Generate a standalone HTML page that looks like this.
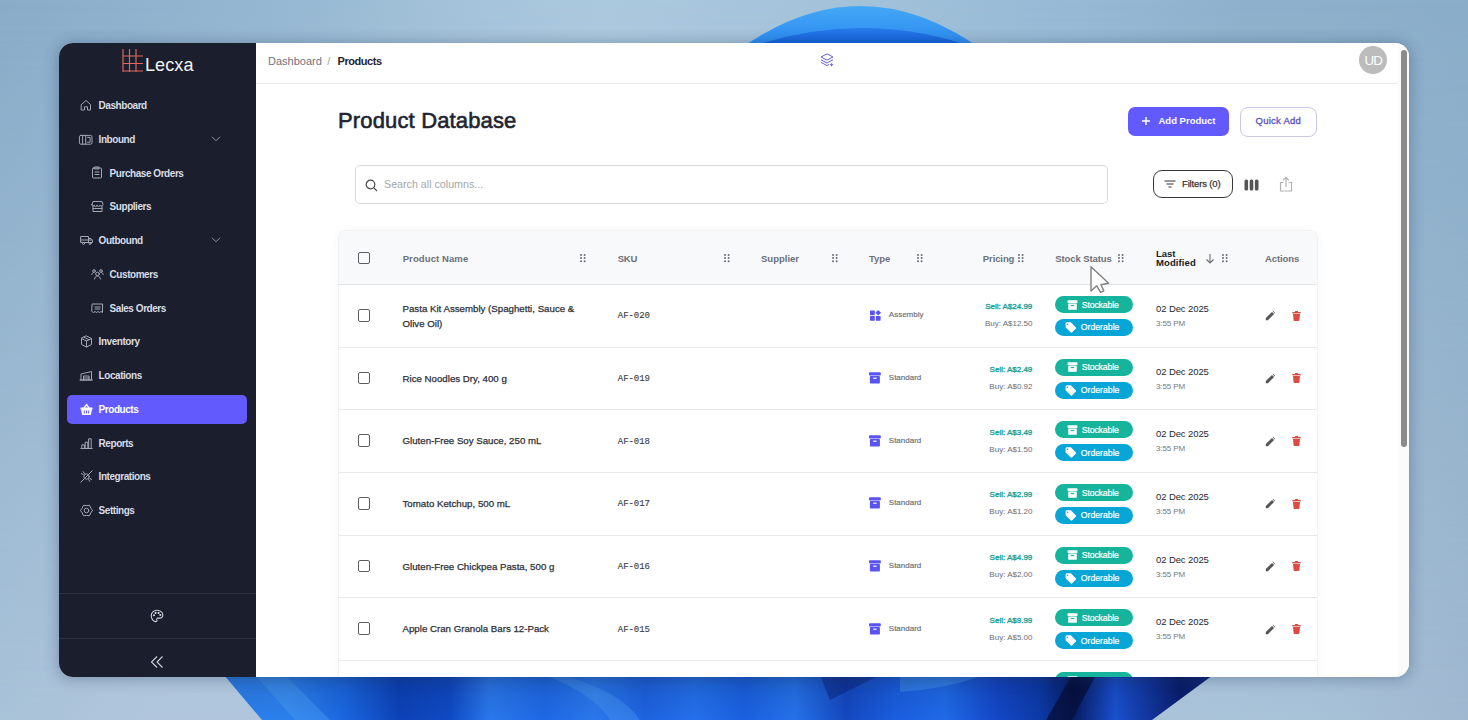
<!DOCTYPE html>
<html><head><meta charset="utf-8">
<style>
*{margin:0;padding:0;box-sizing:border-box}
html,body{width:1468px;height:720px;overflow:hidden}
body{position:relative;font-family:"Liberation Sans",sans-serif;background:#98b8d2}
.abs{position:absolute}
#bg{position:absolute;left:0;top:0;width:1468px;height:720px}
#shadow{position:absolute;left:59px;top:43px;width:1350px;height:634px;border-radius:14px;box-shadow:0 1px 14px 2px rgba(30,50,85,.30)}
#win{position:absolute;left:0;top:0;width:1468px;height:720px;clip-path:inset(43px 59px 43px 59px round 14px);background:#fff}
#side{position:absolute;left:59px;top:43px;width:197px;height:634px;background:#1b1f2d}
.nav{position:absolute;color:#d9dce4;font-weight:700;font-size:10px;letter-spacing:-0.45px;white-space:nowrap;line-height:12px}
.ico{position:absolute;overflow:visible}
.t{white-space:nowrap}
</style></head>
<body>
<svg id="bg" width="1468" height="720" viewBox="0 0 1468 720">
  <defs>
    <linearGradient id="bgt" x1="0" y1="0" x2="1" y2="0">
      <stop offset="0" stop-color="#89acc8"/>
      <stop offset=".21" stop-color="#98b9d3"/>
      <stop offset=".31" stop-color="#a4c3da"/>
      <stop offset=".41" stop-color="#abc9de"/>
      <stop offset=".58" stop-color="#a3c2da"/>
      <stop offset=".75" stop-color="#95b8d4"/>
      <stop offset=".855" stop-color="#8eb0cb"/>
      <stop offset="1" stop-color="#8aaec9"/>
    </linearGradient>
    <linearGradient id="bgb" x1="0" y1="0" x2="1" y2="0">
      <stop offset="0" stop-color="#a8c2d8"/>
      <stop offset=".105" stop-color="#b1c6dc"/>
      <stop offset=".5" stop-color="#aec5db"/>
      <stop offset=".89" stop-color="#a8c2d8"/>
      <stop offset="1" stop-color="#a0b8d0"/>
    </linearGradient>
    <linearGradient id="fade" x1="0" y1="0" x2="0" y2="1">
      <stop offset="0" stop-color="#fff" stop-opacity="0"/>
      <stop offset="1" stop-color="#fff" stop-opacity="1"/>
    </linearGradient>
    <mask id="m1"><rect width="1468" height="720" fill="url(#fade)"/></mask>
    <linearGradient id="arc" x1="0" y1="6" x2="0" y2="43" gradientUnits="userSpaceOnUse">
      <stop offset="0" stop-color="#44a8f6"/>
      <stop offset="1" stop-color="#2c8cf0"/>
    </linearGradient>
    <linearGradient id="arc2" x1="0" y1="27" x2="0" y2="43" gradientUnits="userSpaceOnUse">
      <stop offset="0" stop-color="#2a7eec"/>
      <stop offset="1" stop-color="#1462de"/>
    </linearGradient>
    <linearGradient id="bloom" x1="225" y1="0" x2="1213" y2="0" gradientUnits="userSpaceOnUse">
      <stop offset="0.000" stop-color="#2c7fec"/>
      <stop offset="0.066" stop-color="#2b80ee"/>
      <stop offset="0.121" stop-color="#1a66e0"/>
      <stop offset="0.177" stop-color="#0d42b8"/>
      <stop offset="0.228" stop-color="#0f4ac4"/>
      <stop offset="0.268" stop-color="#2a78ec"/>
      <stop offset="0.324" stop-color="#1e68e6"/>
      <stop offset="0.374" stop-color="#2a78ec"/>
      <stop offset="0.425" stop-color="#1d62e0"/>
      <stop offset="0.476" stop-color="#2470ec"/>
      <stop offset="0.526" stop-color="#1a60e0"/>
      <stop offset="0.577" stop-color="#2572ea"/>
      <stop offset="0.628" stop-color="#1448c0"/>
      <stop offset="0.678" stop-color="#1a5ee0"/>
      <stop offset="0.729" stop-color="#1f6ae8"/>
      <stop offset="0.779" stop-color="#1448c8"/>
      <stop offset="0.825" stop-color="#0c3aa8"/>
      <stop offset="0.860" stop-color="#071d66"/>
      <stop offset="0.901" stop-color="#1a50d0"/>
      <stop offset="0.967" stop-color="#0a1e70"/>
      <stop offset="1.000" stop-color="#0e2a80"/>
    </linearGradient>
    <linearGradient id="bloomv" x1="0" y1="0" x2="0" y2="1">
      <stop offset="0" stop-color="#000" stop-opacity=".12"/>
      <stop offset="1" stop-color="#000" stop-opacity="0"/>
    </linearGradient>
  </defs>
  <rect width="1468" height="720" fill="url(#bgt)"/>
  <rect width="1468" height="720" fill="url(#bgb)" mask="url(#m1)"/>
  <path d="M738.5 50 Q860.5 -38 982.5 50Z" fill="url(#arc)"/>
  <path d="M742 50 Q862 6 982 50Z" fill="url(#arc2)"/>
  <path d="M224 675 L1213 675 L1152 720 L262 720 Z" fill="url(#bloom)"/>
  <path d="M255 675 L285 675 L330 720 L295 720Z" fill="#4a9cf4" opacity=".45"/>
  <path d="M560 675 Q620 690 640 720 L610 720 Q595 695 545 675Z" fill="#4a9cf4" opacity=".4"/>
  <path d="M1072 675 L1096 675 L1072 720 L1046 720Z" fill="#050f3a" opacity=".75"/>
  <path d="M900 675 L985 675 Q940 690 900 692Z" fill="#4a9cf4" opacity=".45"/>
  <path d="M820 675 L880 675 Q850 690 830 700Z" fill="#0a2380" opacity=".5"/>
  <path d="M224 675 L1213 675 L1152 720 L262 720 Z" fill="url(#bloomv)"/>
</svg>
<div id="shadow"></div>
<div id="win">
  <div id="side"></div>

<svg class="ico" style="left:121px;top:48px" width="23" height="25" viewBox="0 0 23 25" fill="none" stroke="#e0685b" stroke-width="1.15">
<path d="M2 1v23M8.5 1v23M15 1v23M2 8h20M2 15.5h20M2 23h20"/></svg>
<div class="abs" style="left:145px;top:54px;font-size:18px;line-height:22px;color:#f2f3f6;letter-spacing:0.1px">Lecxa</div>
<div class="abs" style="left:59px;top:593px;width:197px;height:1px;background:#2c3140"></div>
<div class="abs" style="left:59px;top:638px;width:197px;height:1px;background:#2c3140"></div>
<svg class="ico" style="left:150px;top:609px" width="14" height="14" viewBox="0 0 14 14" fill="none" stroke="#d0d3da" stroke-width="1.1">
<path d="M7 1.2C3.7 1.2 1.2 3.7 1.2 6.8c0 3 2.4 5.8 4.6 5.8 1.2 0 1.4-.8 1-1.6-.4-.9.1-1.9 1.2-1.9h1.5c2 0 3.3-1.3 3.3-3.1C12.8 3.300 10.200 1.2 7 1.2z"/>
<circle cx="4" cy="6.3" r=".5" fill="#d0d3da"/><circle cx="5.6" cy="3.9" r=".5" fill="#d0d3da"/><circle cx="8.6" cy="3.9" r=".5" fill="#d0d3da"/><circle cx="10.3" cy="6" r=".5" fill="#d0d3da"/></svg>
<svg class="ico" style="left:150px;top:655px" width="14" height="14" viewBox="0 0 14 14" fill="none" stroke="#d0d3da" stroke-width="1.1">
<path d="M7 1.5L1.5 7 7 12.5M12.5 1.5L7 7l5.5 5.5"/></svg>
<svg class="ico" style="left:80px;top:98.9px" width="13" height="13" viewBox="0 0 13 13" fill="none" stroke="#a3a7b2" stroke-width="1" stroke-linejoin="round" stroke-linecap="round"><path d="M1.5 5.5L6 1.5l4.5 4V11H7.5V7.8h-3V11H1.5z"/></svg>
<div class="nav" style="left:98.6px;top:99.9px">Dashboard</div>
<svg class="ico" style="left:80px;top:132.7px" width="13" height="13" viewBox="0 0 13 13" fill="none" stroke="#a3a7b2" stroke-width="1" stroke-linejoin="round" stroke-linecap="round"><rect x="-0.6" y="2.4" width="12.6" height="8.8" rx="1.4"/><path d="M2.6 2.4v8.8M5.7 2.4v8.8M7.6 4.4h2.5v4.8H7.6"/></svg>
<div class="nav" style="left:98.6px;top:133.7px">Inbound</div>
<svg class="ico" style="left:211px;top:136.2px" width="10" height="6" viewBox="0 0 10 6" fill="none" stroke="#8b909b" stroke-width="1"><path d="M1 .8l4 4 4-4"/></svg>
<svg class="ico" style="left:91px;top:166.4px" width="13" height="13" viewBox="0 0 13 13" fill="none" stroke="#a3a7b2" stroke-width="1" stroke-linejoin="round" stroke-linecap="round"><rect x="1.5" y="2" width="9" height="10" rx="1"/><path d="M4 1h4v2H4zM4 6h4M4 8.5h4"/></svg>
<div class="nav" style="left:109.6px;top:167.5px">Purchase Orders</div>
<svg class="ico" style="left:91px;top:200.2px" width="13" height="13" viewBox="0 0 13 13" fill="none" stroke="#a3a7b2" stroke-width="1" stroke-linejoin="round" stroke-linecap="round"><path d="M1 4.5l1-3h9l1 3c0 1-1 1.5-1.7 1.5S9 5.5 9 5a1.5 1.5 0 0 1-3 0 1.5 1.5 0 0 1-3 0c0 .5-.6 1-1.3 1S1 5.5 1 4.5z"/><path d="M2 6v5.5h9V6M2 8.5h9"/></svg>
<div class="nav" style="left:109.6px;top:201.2px">Suppliers</div>
<svg class="ico" style="left:80px;top:233.9px" width="13" height="13" viewBox="0 0 13 13" fill="none" stroke="#a3a7b2" stroke-width="1" stroke-linejoin="round" stroke-linecap="round"><path d="M1 2.5h7.5v6H1zM8.5 4.5h2.5l1.5 2v2h-4"/><circle cx="3.5" cy="9.5" r="1"/><circle cx="10" cy="9.5" r="1"/><path d="M1 6h11"/></svg>
<div class="nav" style="left:98.6px;top:235.0px">Outbound</div>
<svg class="ico" style="left:211px;top:237.4px" width="10" height="6" viewBox="0 0 10 6" fill="none" stroke="#8b909b" stroke-width="1"><path d="M1 .8l4 4 4-4"/></svg>
<svg class="ico" style="left:91px;top:267.7px" width="13" height="13" viewBox="0 0 13 13" fill="none" stroke="#a3a7b2" stroke-width="1" stroke-linejoin="round" stroke-linecap="round"><circle cx="6.5" cy="6" r="1.8"/><path d="M3.5 11c.5-2 1.5-3 3-3s2.5 1 3 3"/><circle cx="3" cy="3" r="1.3"/><circle cx="10" cy="3" r="1.3"/><path d="M.8 6.5c.3-1.3 1-2 2.2-2M12.2 6.5c-.3-1.3-1-2-2.2-2"/></svg>
<div class="nav" style="left:109.6px;top:268.7px">Customers</div>
<svg class="ico" style="left:91px;top:301.5px" width="13" height="13" viewBox="0 0 13 13" fill="none" stroke="#a3a7b2" stroke-width="1" stroke-linejoin="round" stroke-linecap="round"><path d="M1.5 2h10v8.5l-1.5-1-1.5 1-1.5-1-1.5 1-1.5-1-1.5 1-1.5-1z"/><path d="M4 5h5M4 7h5"/></svg>
<div class="nav" style="left:109.6px;top:302.5px">Sales Orders</div>
<svg class="ico" style="left:80px;top:335.2px" width="13" height="13" viewBox="0 0 13 13" fill="none" stroke="#a3a7b2" stroke-width="1" stroke-linejoin="round" stroke-linecap="round"><path d="M6.5 1l5 2.5v6l-5 2.5-5-2.5v-6z"/><path d="M1.5 3.5l5 2.5 5-2.5M6.5 6v6M4 2.2l5 2.6"/></svg>
<div class="nav" style="left:98.6px;top:336.2px">Inventory</div>
<svg class="ico" style="left:80px;top:369.0px" width="13" height="13" viewBox="0 0 13 13" fill="none" stroke="#a3a7b2" stroke-width="1" stroke-linejoin="round" stroke-linecap="round"><path d="M1 11V5l10.5-2.5V11H1z"/><path d="M3.5 11V7h5.5v4M3.5 9h5.5M0 11h12.5"/></svg>
<div class="nav" style="left:98.6px;top:370.0px">Locations</div>
<div class="abs" style="left:67px;top:395px;width:180px;height:29px;border-radius:5px;background:#625afc"></div>
<svg class="ico" style="left:79.5px;top:402.7px" width="13" height="13" viewBox="0 0 13 13"><path d="M4 5L6.5 1.5 9 5" fill="none" stroke="#fff" stroke-width="1.3"/><path d="M0.5 4.5h12v2h-.6l-1 5.5H2.1l-1-5.5H.5z" fill="#fff"/><path d="M4.3 7.5v3M6.5 7.5v3M8.7 7.5v3" stroke="#625afc" stroke-width="1"/></svg>
<div class="nav" style="left:98.6px;top:403.8px;color:#fff">Products</div>
<svg class="ico" style="left:80px;top:436.5px" width="13" height="13" viewBox="0 0 13 13" fill="none" stroke="#a3a7b2" stroke-width="1" stroke-linejoin="round" stroke-linecap="round"><path d="M0.8 11.5h11.4M1.8 11.5V7.8h2.6v3.7M5.2 11.5V5.2h2.6v6.3M8.6 11.5V1.8h2.6v9.7"/></svg>
<div class="nav" style="left:98.6px;top:437.5px">Reports</div>
<svg class="ico" style="left:80px;top:470.3px" width="13" height="13" viewBox="0 0 13 13" fill="none" stroke="#a3a7b2" stroke-width="1" stroke-linejoin="round" stroke-linecap="round"><path d="M0.8 12.2L12.2 0.8"/><circle cx="6.5" cy="6.5" r="2.7"/><path d="M3.2 1.6l1.2 1.9M1.4 3.6l1.9 1M9.8 11.4l-1.2-1.9M11.6 9.4l-1.9-1"/></svg>
<div class="nav" style="left:98.6px;top:471.3px">Integrations</div>
<svg class="ico" style="left:80px;top:504.0px" width="13" height="13" viewBox="0 0 13 13" fill="none" stroke="#a3a7b2" stroke-width="1" stroke-linejoin="round" stroke-linecap="round"><path d="M12.50 6.50 L10.74 8.95 L9.50 11.70 L6.50 11.40 L3.50 11.70 L2.26 8.95 L0.50 6.50 L2.26 4.05 L3.50 1.30 L6.50 1.60 L9.50 1.30 L10.74 4.05Z"/><circle cx="6.5" cy="6.5" r="2.3"/></svg>
<div class="nav" style="left:98.6px;top:505.0px">Settings</div>

<!-- header -->
<div class="abs" style="left:256px;top:83px;width:1142px;height:1px;background:#e6e8ec"></div>
<div class="abs t" style="left:268px;top:54.8px;font-size:11px;line-height:13px;color:#6f7480">Dashboard</div>
<div class="abs t" style="left:327.3px;top:55px;font-size:11px;line-height:13px;color:#9a9ea6">/</div>
<div class="abs t" style="left:337.5px;top:54.8px;font-size:11px;line-height:13px;color:#1f2430;font-weight:700;letter-spacing:-0.45px">Products</div>
<svg class="ico" style="left:819px;top:52px" width="16" height="16" viewBox="0 0 16 16" fill="none" stroke="#6660d8" stroke-width="1" stroke-linejoin="round">
<path d="M8 1.8L14 5 8 8.2 2 5z"/><path d="M2 7.8L8 11l6-3.2"/><path d="M2 10.3L8 13.6l2.3-1.2"/><path d="M12.6 11.2v3M11.1 12.7h3"/></svg>
<div class="abs" style="left:1359.2px;top:46.3px;width:27.8px;height:28px;border-radius:50%;background:#bcbcbc"></div>
<div class="abs t" style="left:1364.6px;top:53.3px;font-size:13.4px;line-height:15px;color:#fff;letter-spacing:-1.1px">UD</div>
<!-- TABLE -->
<div class="abs" style="left:337.5px;top:230px;width:980px;height:470px;border-radius:8px;border:1px solid #f1f2f4;background:#fff;box-shadow:0 0 8px rgba(0,0,0,.04)"></div>
<div class="abs" style="left:338.5px;top:231px;width:978px;height:53px;border-radius:7px 7px 0 0;background:#f8f9fa"></div>
<div class="abs" style="left:338px;top:284px;width:979px;height:1px;background:#e2e4e7"></div>
<div class="abs" style="left:358px;top:251.80px;width:12.4px;height:12.4px;border:1.8px solid #5c5e63;border-radius:2px"></div>
<div class="abs t" style="left:402.70px;top:252.71px;font-size:9.5px;line-height:12px;color:#6b7079;font-weight:700;letter-spacing:0.1px;">Product Name</div>
<svg class="ico" style="left:580.4px;top:254.0px" width="6" height="8.5" viewBox="0 0 6 8.5" fill="#6a6e75"><circle cx="1.0" cy="1.0" r="1"/><circle cx="1.0" cy="4.1" r="1"/><circle cx="1.0" cy="7.2" r="1"/><circle cx="4.6" cy="1.0" r="1"/><circle cx="4.6" cy="4.1" r="1"/><circle cx="4.6" cy="7.2" r="1"/></svg>
<div class="abs t" style="left:617.80px;top:252.71px;font-size:9.5px;line-height:12px;color:#6b7079;font-weight:700;letter-spacing:-0.3px;">SKU</div>
<svg class="ico" style="left:723.6px;top:254.0px" width="6" height="8.5" viewBox="0 0 6 8.5" fill="#6a6e75"><circle cx="1.0" cy="1.0" r="1"/><circle cx="1.0" cy="4.1" r="1"/><circle cx="1.0" cy="7.2" r="1"/><circle cx="4.6" cy="1.0" r="1"/><circle cx="4.6" cy="4.1" r="1"/><circle cx="4.6" cy="7.2" r="1"/></svg>
<div class="abs t" style="left:761.00px;top:252.71px;font-size:9.5px;line-height:12px;color:#6b7079;font-weight:700;letter-spacing:0px;">Supplier</div>
<svg class="ico" style="left:831.8px;top:254.0px" width="6" height="8.5" viewBox="0 0 6 8.5" fill="#6a6e75"><circle cx="1.0" cy="1.0" r="1"/><circle cx="1.0" cy="4.1" r="1"/><circle cx="1.0" cy="7.2" r="1"/><circle cx="4.6" cy="1.0" r="1"/><circle cx="4.6" cy="4.1" r="1"/><circle cx="4.6" cy="7.2" r="1"/></svg>
<div class="abs t" style="left:868.90px;top:252.71px;font-size:9.5px;line-height:12px;color:#6b7079;font-weight:700;letter-spacing:0px;">Type</div>
<svg class="ico" style="left:917.4px;top:254.0px" width="6" height="8.5" viewBox="0 0 6 8.5" fill="#6a6e75"><circle cx="1.0" cy="1.0" r="1"/><circle cx="1.0" cy="4.1" r="1"/><circle cx="1.0" cy="7.2" r="1"/><circle cx="4.6" cy="1.0" r="1"/><circle cx="4.6" cy="4.1" r="1"/><circle cx="4.6" cy="7.2" r="1"/></svg>
<div class="abs t" style="left:982.80px;top:252.71px;font-size:9.5px;line-height:12px;color:#6b7079;font-weight:700;letter-spacing:-0.1px;">Pricing</div>
<svg class="ico" style="left:1017.8px;top:254.0px" width="6" height="8.5" viewBox="0 0 6 8.5" fill="#6a6e75"><circle cx="1.0" cy="1.0" r="1"/><circle cx="1.0" cy="4.1" r="1"/><circle cx="1.0" cy="7.2" r="1"/><circle cx="4.6" cy="1.0" r="1"/><circle cx="4.6" cy="4.1" r="1"/><circle cx="4.6" cy="7.2" r="1"/></svg>
<div class="abs t" style="left:1055.30px;top:252.71px;font-size:9.5px;line-height:12px;color:#6b7079;font-weight:700;letter-spacing:-0.1px;">Stock Status</div>
<svg class="ico" style="left:1118.1px;top:254.0px" width="6" height="8.5" viewBox="0 0 6 8.5" fill="#6a6e75"><circle cx="1.0" cy="1.0" r="1"/><circle cx="1.0" cy="4.1" r="1"/><circle cx="1.0" cy="7.2" r="1"/><circle cx="4.6" cy="1.0" r="1"/><circle cx="4.6" cy="4.1" r="1"/><circle cx="4.6" cy="7.2" r="1"/></svg>
<div class="abs t" style="left:1156.00px;top:247.91px;font-size:9.5px;line-height:12px;color:#161b26;font-weight:700;letter-spacing:0px;">Last</div>
<div class="abs t" style="left:1156.00px;top:257.21px;font-size:9.5px;line-height:12px;color:#161b26;font-weight:700;letter-spacing:0.1px;">Modified</div>
<svg class="ico" style="left:1204.5px;top:252.5px" width="10" height="11" viewBox="0 0 10 11" fill="none" stroke="#6b7079" stroke-width="1.1"><path d="M5 1v9M1.5 6.5L5 10l3.5-3.5"/></svg>
<svg class="ico" style="left:1221.8px;top:254.0px" width="6" height="8.5" viewBox="0 0 6 8.5" fill="#6a6e75"><circle cx="1.0" cy="1.0" r="1"/><circle cx="1.0" cy="4.1" r="1"/><circle cx="1.0" cy="7.2" r="1"/><circle cx="4.6" cy="1.0" r="1"/><circle cx="4.6" cy="4.1" r="1"/><circle cx="4.6" cy="7.2" r="1"/></svg>
<div class="abs t" style="left:1265.00px;top:252.71px;font-size:9.5px;line-height:12px;color:#6b7079;font-weight:700;letter-spacing:-0.1px;">Actions</div>
<div class="abs" style="left:358px;top:309.13px;width:12.4px;height:12.4px;border:1.8px solid #5c5e63;border-radius:2px"></div>
<div class="abs t" style="left:402.50px;top:302.67px;font-size:9.7px;line-height:12px;color:#2c2f36;font-weight:400;letter-spacing:0px;-webkit-text-stroke:0.25px currentColor;">Pasta Kit Assembly (Spaghetti, Sauce &</div>
<div class="abs t" style="left:402.50px;top:317.67px;font-size:9.7px;line-height:12px;color:#2c2f36;font-weight:400;letter-spacing:0px;-webkit-text-stroke:0.25px currentColor;">Olive Oil)</div>
<div class="abs t" style="left:617.80px;top:311.32px;font-size:9px;line-height:11px;color:#3a3d43;font-weight:400;letter-spacing:-0.05px;font-family:'Liberation Mono',monospace;-webkit-text-stroke:0.12px currentColor;">AF-020</div>
<svg class="ico" style="left:870px;top:310.13px" width="11" height="11" viewBox="0 0 11 11" fill="#5a53ef"><rect x="0" y="0.6" width="4.8" height="4.6" rx=".6"/><rect x="0" y="5.9" width="4.8" height="4.8" rx=".6"/><rect x="5.8" y="5.9" width="4.8" height="4.8" rx=".6"/><path d="M8.2 -0.1L11 2.8 8.2 5.6 5.4 2.8z"/></svg>
<div class="abs t" style="left:888.80px;top:310.46px;font-size:8px;line-height:10px;color:#6a6d73;font-weight:400;letter-spacing:0px;-webkit-text-stroke:0.15px currentColor;">Assembly</div>
<div class="abs t" style="right:435.70px;top:302.26px;font-size:8px;line-height:10px;color:#1ea398;font-weight:400;letter-spacing:0px;-webkit-text-stroke:0.35px #1ea398;">Sell: A$24.99</div>
<div class="abs t" style="right:435.50px;top:319.26px;font-size:8px;line-height:10px;color:#6a6d73;font-weight:400;letter-spacing:0px;">Buy: A$12.50</div>
<div class="abs" style="left:1055px;top:296.13px;width:78px;height:17px;border-radius:9px;background:#16b49c"></div>
<svg class="ico" style="left:1066.5px;top:299.74px" width="11" height="10" viewBox="0 0 11 10"><rect x="0.5" y="0.3" width="10" height="2.6" rx=".6" fill="#fff"/><rect x="1.2" y="3.5" width="8.6" height="6.3" rx=".6" fill="#fff"/><rect x="3.8" y="5" width="3.4" height="1.1" fill="#16b49c"/></svg>
<div class="abs t" style="left:1081.80px;top:299.72px;font-size:8.7px;line-height:11px;color:#fff;font-weight:400;letter-spacing:-0.15px;-webkit-text-stroke:0.2px #fff;">Stockable</div>
<div class="abs" style="left:1055px;top:318.83px;width:78px;height:17px;border-radius:9px;background:#08a6d6"></div>
<svg class="ico" style="left:1065px;top:321.83px" width="12" height="11" viewBox="0 0 12 11"><path d="M0.6 1.6v3.2c0 .4.2.7.4.9l4.6 4.6c.5.5 1.2.5 1.6 0l3.5-3.5c.5-.5.5-1.2 0-1.6L6.1.6C5.9.4 5.6.2 5.2.2H2C1.2.2.6.8.6 1.6z" fill="#fff"/><circle cx="2.5" cy="2.3" r=".8" fill="#08a6d6"/></svg>
<div class="abs t" style="left:1080.80px;top:322.42px;font-size:8.7px;line-height:11px;color:#fff;font-weight:400;letter-spacing:0px;-webkit-text-stroke:0.2px #fff;">Orderable</div>
<div class="abs t" style="left:1156.00px;top:303.04px;font-size:9.5px;line-height:12px;color:#25282e;font-weight:400;letter-spacing:-0.1px;">02 Dec 2025</div>
<div class="abs t" style="left:1156.00px;top:318.86px;font-size:8px;line-height:10px;color:#75787e;font-weight:400;letter-spacing:-0.1px;">3:55 PM</div>
<svg class="ico" style="left:1265px;top:310.33px" width="11" height="11" viewBox="0 0 11 11" fill="#555"><path d="M0.8 8.1v2.1h2.1l6.2-6.2-2.1-2.1z"/><path d="M7.8 1l2.2 2.2" stroke="#555" stroke-width=".9"/></svg>
<svg class="ico" style="left:1291.5px;top:310.73px" width="9" height="10" viewBox="0 0 9 10" fill="#dc4a42"><rect x="0.3" y="1" width="8.4" height="1.4"/><rect x="3" y="0" width="3" height="1.2"/><path d="M1 3h7l-.6 6.2c0 .5-.4.8-.9.8H2.5c-.5 0-.9-.3-.9-.8z"/></svg>
<div class="abs" style="left:338px;top:346.67px;width:979px;height:1px;background:#e6e8eb"></div>
<div class="abs" style="left:358px;top:371.81px;width:12.4px;height:12.4px;border:1.8px solid #5c5e63;border-radius:2px"></div>
<div class="abs t" style="left:402.50px;top:372.54px;font-size:9.7px;line-height:12px;color:#2c2f36;font-weight:400;letter-spacing:0px;-webkit-text-stroke:0.25px currentColor;">Rice Noodles Dry, 400 g</div>
<div class="abs t" style="left:617.80px;top:373.99px;font-size:9px;line-height:11px;color:#3a3d43;font-weight:400;letter-spacing:-0.05px;font-family:'Liberation Mono',monospace;-webkit-text-stroke:0.12px currentColor;">AF-019</div>
<svg class="ico" style="left:869.3px;top:372.00px" width="12" height="12" viewBox="0 0 12 12" fill="#5a53ef"><rect x="0" y="0.3" width="11.8" height="3.2" rx=".8"/><rect x="0.9" y="4.1" width="10" height="7.5" rx=".8"/><rect x="4.2" y="5.6" width="3.4" height="1.2" fill="#fff"/></svg>
<div class="abs t" style="left:888.80px;top:373.13px;font-size:8px;line-height:10px;color:#6a6d73;font-weight:400;letter-spacing:0px;-webkit-text-stroke:0.15px currentColor;">Standard</div>
<div class="abs t" style="right:435.70px;top:364.93px;font-size:8px;line-height:10px;color:#1ea398;font-weight:400;letter-spacing:0px;-webkit-text-stroke:0.35px #1ea398;">Sell: A$2.49</div>
<div class="abs t" style="right:435.50px;top:381.93px;font-size:8px;line-height:10px;color:#6a6d73;font-weight:400;letter-spacing:0px;">Buy: A$0.92</div>
<div class="abs" style="left:1055px;top:358.81px;width:78px;height:17px;border-radius:9px;background:#16b49c"></div>
<svg class="ico" style="left:1066.5px;top:362.41px" width="11" height="10" viewBox="0 0 11 10"><rect x="0.5" y="0.3" width="10" height="2.6" rx=".6" fill="#fff"/><rect x="1.2" y="3.5" width="8.6" height="6.3" rx=".6" fill="#fff"/><rect x="3.8" y="5" width="3.4" height="1.1" fill="#16b49c"/></svg>
<div class="abs t" style="left:1081.80px;top:362.39px;font-size:8.7px;line-height:11px;color:#fff;font-weight:400;letter-spacing:-0.15px;-webkit-text-stroke:0.2px #fff;">Stockable</div>
<div class="abs" style="left:1055px;top:381.50px;width:78px;height:17px;border-radius:9px;background:#08a6d6"></div>
<svg class="ico" style="left:1065px;top:384.50px" width="12" height="11" viewBox="0 0 12 11"><path d="M0.6 1.6v3.2c0 .4.2.7.4.9l4.6 4.6c.5.5 1.2.5 1.6 0l3.5-3.5c.5-.5.5-1.2 0-1.6L6.1.6C5.9.4 5.6.2 5.2.2H2C1.2.2.6.8.6 1.6z" fill="#fff"/><circle cx="2.5" cy="2.3" r=".8" fill="#08a6d6"/></svg>
<div class="abs t" style="left:1080.80px;top:385.09px;font-size:8.7px;line-height:11px;color:#fff;font-weight:400;letter-spacing:0px;-webkit-text-stroke:0.2px #fff;">Orderable</div>
<div class="abs t" style="left:1156.00px;top:365.71px;font-size:9.5px;line-height:12px;color:#25282e;font-weight:400;letter-spacing:-0.1px;">02 Dec 2025</div>
<div class="abs t" style="left:1156.00px;top:381.53px;font-size:8px;line-height:10px;color:#75787e;font-weight:400;letter-spacing:-0.1px;">3:55 PM</div>
<svg class="ico" style="left:1265px;top:373.00px" width="11" height="11" viewBox="0 0 11 11" fill="#555"><path d="M0.8 8.1v2.1h2.1l6.2-6.2-2.1-2.1z"/><path d="M7.8 1l2.2 2.2" stroke="#555" stroke-width=".9"/></svg>
<svg class="ico" style="left:1291.5px;top:373.40px" width="9" height="10" viewBox="0 0 9 10" fill="#dc4a42"><rect x="0.3" y="1" width="8.4" height="1.4"/><rect x="3" y="0" width="3" height="1.2"/><path d="M1 3h7l-.6 6.2c0 .5-.4.8-.9.8H2.5c-.5 0-.9-.3-.9-.8z"/></svg>
<div class="abs" style="left:338px;top:409.34px;width:979px;height:1px;background:#e6e8eb"></div>
<div class="abs" style="left:358px;top:434.48px;width:12.4px;height:12.4px;border:1.8px solid #5c5e63;border-radius:2px"></div>
<div class="abs t" style="left:402.50px;top:435.21px;font-size:9.7px;line-height:12px;color:#2c2f36;font-weight:400;letter-spacing:0px;-webkit-text-stroke:0.25px currentColor;">Gluten-Free Soy Sauce, 250 mL</div>
<div class="abs t" style="left:617.80px;top:436.66px;font-size:9px;line-height:11px;color:#3a3d43;font-weight:400;letter-spacing:-0.05px;font-family:'Liberation Mono',monospace;-webkit-text-stroke:0.12px currentColor;">AF-018</div>
<svg class="ico" style="left:869.3px;top:434.68px" width="12" height="12" viewBox="0 0 12 12" fill="#5a53ef"><rect x="0" y="0.3" width="11.8" height="3.2" rx=".8"/><rect x="0.9" y="4.1" width="10" height="7.5" rx=".8"/><rect x="4.2" y="5.6" width="3.4" height="1.2" fill="#fff"/></svg>
<div class="abs t" style="left:888.80px;top:435.80px;font-size:8px;line-height:10px;color:#6a6d73;font-weight:400;letter-spacing:0px;-webkit-text-stroke:0.15px currentColor;">Standard</div>
<div class="abs t" style="right:435.70px;top:427.60px;font-size:8px;line-height:10px;color:#1ea398;font-weight:400;letter-spacing:0px;-webkit-text-stroke:0.35px #1ea398;">Sell: A$3.49</div>
<div class="abs t" style="right:435.50px;top:444.60px;font-size:8px;line-height:10px;color:#6a6d73;font-weight:400;letter-spacing:0px;">Buy: A$1.50</div>
<div class="abs" style="left:1055px;top:421.48px;width:78px;height:17px;border-radius:9px;background:#16b49c"></div>
<svg class="ico" style="left:1066.5px;top:425.08px" width="11" height="10" viewBox="0 0 11 10"><rect x="0.5" y="0.3" width="10" height="2.6" rx=".6" fill="#fff"/><rect x="1.2" y="3.5" width="8.6" height="6.3" rx=".6" fill="#fff"/><rect x="3.8" y="5" width="3.4" height="1.1" fill="#16b49c"/></svg>
<div class="abs t" style="left:1081.80px;top:425.06px;font-size:8.7px;line-height:11px;color:#fff;font-weight:400;letter-spacing:-0.15px;-webkit-text-stroke:0.2px #fff;">Stockable</div>
<div class="abs" style="left:1055px;top:444.18px;width:78px;height:17px;border-radius:9px;background:#08a6d6"></div>
<svg class="ico" style="left:1065px;top:447.18px" width="12" height="11" viewBox="0 0 12 11"><path d="M0.6 1.6v3.2c0 .4.2.7.4.9l4.6 4.6c.5.5 1.2.5 1.6 0l3.5-3.5c.5-.5.5-1.2 0-1.6L6.1.6C5.9.4 5.6.2 5.2.2H2C1.2.2.6.8.6 1.6z" fill="#fff"/><circle cx="2.5" cy="2.3" r=".8" fill="#08a6d6"/></svg>
<div class="abs t" style="left:1080.80px;top:447.76px;font-size:8.7px;line-height:11px;color:#fff;font-weight:400;letter-spacing:0px;-webkit-text-stroke:0.2px #fff;">Orderable</div>
<div class="abs t" style="left:1156.00px;top:428.38px;font-size:9.5px;line-height:12px;color:#25282e;font-weight:400;letter-spacing:-0.1px;">02 Dec 2025</div>
<div class="abs t" style="left:1156.00px;top:444.20px;font-size:8px;line-height:10px;color:#75787e;font-weight:400;letter-spacing:-0.1px;">3:55 PM</div>
<svg class="ico" style="left:1265px;top:435.68px" width="11" height="11" viewBox="0 0 11 11" fill="#555"><path d="M0.8 8.1v2.1h2.1l6.2-6.2-2.1-2.1z"/><path d="M7.8 1l2.2 2.2" stroke="#555" stroke-width=".9"/></svg>
<svg class="ico" style="left:1291.5px;top:436.07px" width="9" height="10" viewBox="0 0 9 10" fill="#dc4a42"><rect x="0.3" y="1" width="8.4" height="1.4"/><rect x="3" y="0" width="3" height="1.2"/><path d="M1 3h7l-.6 6.2c0 .5-.4.8-.9.8H2.5c-.5 0-.9-.3-.9-.8z"/></svg>
<div class="abs" style="left:338px;top:472.01px;width:979px;height:1px;background:#e6e8eb"></div>
<div class="abs" style="left:358px;top:497.14px;width:12.4px;height:12.4px;border:1.8px solid #5c5e63;border-radius:2px"></div>
<div class="abs t" style="left:402.50px;top:497.88px;font-size:9.7px;line-height:12px;color:#2c2f36;font-weight:400;letter-spacing:0px;-webkit-text-stroke:0.25px currentColor;">Tomato Ketchup, 500 mL</div>
<div class="abs t" style="left:617.80px;top:499.33px;font-size:9px;line-height:11px;color:#3a3d43;font-weight:400;letter-spacing:-0.05px;font-family:'Liberation Mono',monospace;-webkit-text-stroke:0.12px currentColor;">AF-017</div>
<svg class="ico" style="left:869.3px;top:497.34px" width="12" height="12" viewBox="0 0 12 12" fill="#5a53ef"><rect x="0" y="0.3" width="11.8" height="3.2" rx=".8"/><rect x="0.9" y="4.1" width="10" height="7.5" rx=".8"/><rect x="4.2" y="5.6" width="3.4" height="1.2" fill="#fff"/></svg>
<div class="abs t" style="left:888.80px;top:498.47px;font-size:8px;line-height:10px;color:#6a6d73;font-weight:400;letter-spacing:0px;-webkit-text-stroke:0.15px currentColor;">Standard</div>
<div class="abs t" style="right:435.70px;top:490.27px;font-size:8px;line-height:10px;color:#1ea398;font-weight:400;letter-spacing:0px;-webkit-text-stroke:0.35px #1ea398;">Sell: A$2.99</div>
<div class="abs t" style="right:435.50px;top:507.27px;font-size:8px;line-height:10px;color:#6a6d73;font-weight:400;letter-spacing:0px;">Buy: A$1.20</div>
<div class="abs" style="left:1055px;top:484.14px;width:78px;height:17px;border-radius:9px;background:#16b49c"></div>
<svg class="ico" style="left:1066.5px;top:487.75px" width="11" height="10" viewBox="0 0 11 10"><rect x="0.5" y="0.3" width="10" height="2.6" rx=".6" fill="#fff"/><rect x="1.2" y="3.5" width="8.6" height="6.3" rx=".6" fill="#fff"/><rect x="3.8" y="5" width="3.4" height="1.1" fill="#16b49c"/></svg>
<div class="abs t" style="left:1081.80px;top:487.73px;font-size:8.7px;line-height:11px;color:#fff;font-weight:400;letter-spacing:-0.15px;-webkit-text-stroke:0.2px #fff;">Stockable</div>
<div class="abs" style="left:1055px;top:506.84px;width:78px;height:17px;border-radius:9px;background:#08a6d6"></div>
<svg class="ico" style="left:1065px;top:509.84px" width="12" height="11" viewBox="0 0 12 11"><path d="M0.6 1.6v3.2c0 .4.2.7.4.9l4.6 4.6c.5.5 1.2.5 1.6 0l3.5-3.5c.5-.5.5-1.2 0-1.6L6.1.6C5.9.4 5.6.2 5.2.2H2C1.2.2.6.8.6 1.6z" fill="#fff"/><circle cx="2.5" cy="2.3" r=".8" fill="#08a6d6"/></svg>
<div class="abs t" style="left:1080.80px;top:510.43px;font-size:8.7px;line-height:11px;color:#fff;font-weight:400;letter-spacing:0px;-webkit-text-stroke:0.2px #fff;">Orderable</div>
<div class="abs t" style="left:1156.00px;top:491.05px;font-size:9.5px;line-height:12px;color:#25282e;font-weight:400;letter-spacing:-0.1px;">02 Dec 2025</div>
<div class="abs t" style="left:1156.00px;top:506.87px;font-size:8px;line-height:10px;color:#75787e;font-weight:400;letter-spacing:-0.1px;">3:55 PM</div>
<svg class="ico" style="left:1265px;top:498.34px" width="11" height="11" viewBox="0 0 11 11" fill="#555"><path d="M0.8 8.1v2.1h2.1l6.2-6.2-2.1-2.1z"/><path d="M7.8 1l2.2 2.2" stroke="#555" stroke-width=".9"/></svg>
<svg class="ico" style="left:1291.5px;top:498.74px" width="9" height="10" viewBox="0 0 9 10" fill="#dc4a42"><rect x="0.3" y="1" width="8.4" height="1.4"/><rect x="3" y="0" width="3" height="1.2"/><path d="M1 3h7l-.6 6.2c0 .5-.4.8-.9.8H2.5c-.5 0-.9-.3-.9-.8z"/></svg>
<div class="abs" style="left:338px;top:534.68px;width:979px;height:1px;background:#e6e8eb"></div>
<div class="abs" style="left:358px;top:559.82px;width:12.4px;height:12.4px;border:1.8px solid #5c5e63;border-radius:2px"></div>
<div class="abs t" style="left:402.50px;top:560.55px;font-size:9.7px;line-height:12px;color:#2c2f36;font-weight:400;letter-spacing:0px;-webkit-text-stroke:0.25px currentColor;">Gluten-Free Chickpea Pasta, 500 g</div>
<div class="abs t" style="left:617.80px;top:562.00px;font-size:9px;line-height:11px;color:#3a3d43;font-weight:400;letter-spacing:-0.05px;font-family:'Liberation Mono',monospace;-webkit-text-stroke:0.12px currentColor;">AF-016</div>
<svg class="ico" style="left:869.3px;top:560.02px" width="12" height="12" viewBox="0 0 12 12" fill="#5a53ef"><rect x="0" y="0.3" width="11.8" height="3.2" rx=".8"/><rect x="0.9" y="4.1" width="10" height="7.5" rx=".8"/><rect x="4.2" y="5.6" width="3.4" height="1.2" fill="#fff"/></svg>
<div class="abs t" style="left:888.80px;top:561.14px;font-size:8px;line-height:10px;color:#6a6d73;font-weight:400;letter-spacing:0px;-webkit-text-stroke:0.15px currentColor;">Standard</div>
<div class="abs t" style="right:435.70px;top:552.94px;font-size:8px;line-height:10px;color:#1ea398;font-weight:400;letter-spacing:0px;-webkit-text-stroke:0.35px #1ea398;">Sell: A$4.99</div>
<div class="abs t" style="right:435.50px;top:569.94px;font-size:8px;line-height:10px;color:#6a6d73;font-weight:400;letter-spacing:0px;">Buy: A$2.00</div>
<div class="abs" style="left:1055px;top:546.82px;width:78px;height:17px;border-radius:9px;background:#16b49c"></div>
<svg class="ico" style="left:1066.5px;top:550.42px" width="11" height="10" viewBox="0 0 11 10"><rect x="0.5" y="0.3" width="10" height="2.6" rx=".6" fill="#fff"/><rect x="1.2" y="3.5" width="8.6" height="6.3" rx=".6" fill="#fff"/><rect x="3.8" y="5" width="3.4" height="1.1" fill="#16b49c"/></svg>
<div class="abs t" style="left:1081.80px;top:550.40px;font-size:8.7px;line-height:11px;color:#fff;font-weight:400;letter-spacing:-0.15px;-webkit-text-stroke:0.2px #fff;">Stockable</div>
<div class="abs" style="left:1055px;top:569.52px;width:78px;height:17px;border-radius:9px;background:#08a6d6"></div>
<svg class="ico" style="left:1065px;top:572.52px" width="12" height="11" viewBox="0 0 12 11"><path d="M0.6 1.6v3.2c0 .4.2.7.4.9l4.6 4.6c.5.5 1.2.5 1.6 0l3.5-3.5c.5-.5.5-1.2 0-1.6L6.1.6C5.9.4 5.6.2 5.2.2H2C1.2.2.6.8.6 1.6z" fill="#fff"/><circle cx="2.5" cy="2.3" r=".8" fill="#08a6d6"/></svg>
<div class="abs t" style="left:1080.80px;top:573.10px;font-size:8.7px;line-height:11px;color:#fff;font-weight:400;letter-spacing:0px;-webkit-text-stroke:0.2px #fff;">Orderable</div>
<div class="abs t" style="left:1156.00px;top:553.72px;font-size:9.5px;line-height:12px;color:#25282e;font-weight:400;letter-spacing:-0.1px;">02 Dec 2025</div>
<div class="abs t" style="left:1156.00px;top:569.54px;font-size:8px;line-height:10px;color:#75787e;font-weight:400;letter-spacing:-0.1px;">3:55 PM</div>
<svg class="ico" style="left:1265px;top:561.02px" width="11" height="11" viewBox="0 0 11 11" fill="#555"><path d="M0.8 8.1v2.1h2.1l6.2-6.2-2.1-2.1z"/><path d="M7.8 1l2.2 2.2" stroke="#555" stroke-width=".9"/></svg>
<svg class="ico" style="left:1291.5px;top:561.42px" width="9" height="10" viewBox="0 0 9 10" fill="#dc4a42"><rect x="0.3" y="1" width="8.4" height="1.4"/><rect x="3" y="0" width="3" height="1.2"/><path d="M1 3h7l-.6 6.2c0 .5-.4.8-.9.8H2.5c-.5 0-.9-.3-.9-.8z"/></svg>
<div class="abs" style="left:338px;top:597.35px;width:979px;height:1px;background:#e6e8eb"></div>
<div class="abs" style="left:358px;top:622.49px;width:12.4px;height:12.4px;border:1.8px solid #5c5e63;border-radius:2px"></div>
<div class="abs t" style="left:402.50px;top:623.22px;font-size:9.7px;line-height:12px;color:#2c2f36;font-weight:400;letter-spacing:0px;-webkit-text-stroke:0.25px currentColor;">Apple Cran Granola Bars 12-Pack</div>
<div class="abs t" style="left:617.80px;top:624.67px;font-size:9px;line-height:11px;color:#3a3d43;font-weight:400;letter-spacing:-0.05px;font-family:'Liberation Mono',monospace;-webkit-text-stroke:0.12px currentColor;">AF-015</div>
<svg class="ico" style="left:869.3px;top:622.69px" width="12" height="12" viewBox="0 0 12 12" fill="#5a53ef"><rect x="0" y="0.3" width="11.8" height="3.2" rx=".8"/><rect x="0.9" y="4.1" width="10" height="7.5" rx=".8"/><rect x="4.2" y="5.6" width="3.4" height="1.2" fill="#fff"/></svg>
<div class="abs t" style="left:888.80px;top:623.81px;font-size:8px;line-height:10px;color:#6a6d73;font-weight:400;letter-spacing:0px;-webkit-text-stroke:0.15px currentColor;">Standard</div>
<div class="abs t" style="right:435.70px;top:615.61px;font-size:8px;line-height:10px;color:#1ea398;font-weight:400;letter-spacing:0px;-webkit-text-stroke:0.35px #1ea398;">Sell: A$9.99</div>
<div class="abs t" style="right:435.50px;top:632.61px;font-size:8px;line-height:10px;color:#6a6d73;font-weight:400;letter-spacing:0px;">Buy: A$5.00</div>
<div class="abs" style="left:1055px;top:609.49px;width:78px;height:17px;border-radius:9px;background:#16b49c"></div>
<svg class="ico" style="left:1066.5px;top:613.09px" width="11" height="10" viewBox="0 0 11 10"><rect x="0.5" y="0.3" width="10" height="2.6" rx=".6" fill="#fff"/><rect x="1.2" y="3.5" width="8.6" height="6.3" rx=".6" fill="#fff"/><rect x="3.8" y="5" width="3.4" height="1.1" fill="#16b49c"/></svg>
<div class="abs t" style="left:1081.80px;top:613.07px;font-size:8.7px;line-height:11px;color:#fff;font-weight:400;letter-spacing:-0.15px;-webkit-text-stroke:0.2px #fff;">Stockable</div>
<div class="abs" style="left:1055px;top:632.19px;width:78px;height:17px;border-radius:9px;background:#08a6d6"></div>
<svg class="ico" style="left:1065px;top:635.19px" width="12" height="11" viewBox="0 0 12 11"><path d="M0.6 1.6v3.2c0 .4.2.7.4.9l4.6 4.6c.5.5 1.2.5 1.6 0l3.5-3.5c.5-.5.5-1.2 0-1.6L6.1.6C5.9.4 5.6.2 5.2.2H2C1.2.2.6.8.6 1.6z" fill="#fff"/><circle cx="2.5" cy="2.3" r=".8" fill="#08a6d6"/></svg>
<div class="abs t" style="left:1080.80px;top:635.77px;font-size:8.7px;line-height:11px;color:#fff;font-weight:400;letter-spacing:0px;-webkit-text-stroke:0.2px #fff;">Orderable</div>
<div class="abs t" style="left:1156.00px;top:616.39px;font-size:9.5px;line-height:12px;color:#25282e;font-weight:400;letter-spacing:-0.1px;">02 Dec 2025</div>
<div class="abs t" style="left:1156.00px;top:632.21px;font-size:8px;line-height:10px;color:#75787e;font-weight:400;letter-spacing:-0.1px;">3:55 PM</div>
<svg class="ico" style="left:1265px;top:623.69px" width="11" height="11" viewBox="0 0 11 11" fill="#555"><path d="M0.8 8.1v2.1h2.1l6.2-6.2-2.1-2.1z"/><path d="M7.8 1l2.2 2.2" stroke="#555" stroke-width=".9"/></svg>
<svg class="ico" style="left:1291.5px;top:624.09px" width="9" height="10" viewBox="0 0 9 10" fill="#dc4a42"><rect x="0.3" y="1" width="8.4" height="1.4"/><rect x="3" y="0" width="3" height="1.2"/><path d="M1 3h7l-.6 6.2c0 .5-.4.8-.9.8H2.5c-.5 0-.9-.3-.9-.8z"/></svg>
<div class="abs" style="left:338px;top:660.02px;width:979px;height:1px;background:#e6e8eb"></div>
<div class="abs" style="left:358px;top:685.15px;width:12.4px;height:12.4px;border:1.8px solid #5c5e63;border-radius:2px"></div>
<div class="abs t" style="left:402.50px;top:685.89px;font-size:9.7px;line-height:12px;color:#2c2f36;font-weight:400;letter-spacing:0px;-webkit-text-stroke:0.25px currentColor;">Organic Quinoa, 500 g</div>
<div class="abs t" style="left:617.80px;top:687.34px;font-size:9px;line-height:11px;color:#3a3d43;font-weight:400;letter-spacing:-0.05px;font-family:'Liberation Mono',monospace;-webkit-text-stroke:0.12px currentColor;">AF-014</div>
<svg class="ico" style="left:869.3px;top:685.36px" width="12" height="12" viewBox="0 0 12 12" fill="#5a53ef"><rect x="0" y="0.3" width="11.8" height="3.2" rx=".8"/><rect x="0.9" y="4.1" width="10" height="7.5" rx=".8"/><rect x="4.2" y="5.6" width="3.4" height="1.2" fill="#fff"/></svg>
<div class="abs t" style="left:888.80px;top:686.48px;font-size:8px;line-height:10px;color:#6a6d73;font-weight:400;letter-spacing:0px;-webkit-text-stroke:0.15px currentColor;">Standard</div>
<div class="abs t" style="right:435.70px;top:678.28px;font-size:8px;line-height:10px;color:#1ea398;font-weight:400;letter-spacing:0px;-webkit-text-stroke:0.35px #1ea398;">Sell: A$6.49</div>
<div class="abs t" style="right:435.50px;top:695.28px;font-size:8px;line-height:10px;color:#6a6d73;font-weight:400;letter-spacing:0px;">Buy: A$3.10</div>
<div class="abs" style="left:1055px;top:672.15px;width:78px;height:17px;border-radius:9px;background:#16b49c"></div>
<svg class="ico" style="left:1066.5px;top:675.75px" width="11" height="10" viewBox="0 0 11 10"><rect x="0.5" y="0.3" width="10" height="2.6" rx=".6" fill="#fff"/><rect x="1.2" y="3.5" width="8.6" height="6.3" rx=".6" fill="#fff"/><rect x="3.8" y="5" width="3.4" height="1.1" fill="#16b49c"/></svg>
<div class="abs t" style="left:1081.80px;top:675.74px;font-size:8.7px;line-height:11px;color:#fff;font-weight:400;letter-spacing:-0.15px;-webkit-text-stroke:0.2px #fff;">Stockable</div>
<div class="abs" style="left:1055px;top:694.86px;width:78px;height:17px;border-radius:9px;background:#08a6d6"></div>
<svg class="ico" style="left:1065px;top:697.86px" width="12" height="11" viewBox="0 0 12 11"><path d="M0.6 1.6v3.2c0 .4.2.7.4.9l4.6 4.6c.5.5 1.2.5 1.6 0l3.5-3.5c.5-.5.5-1.2 0-1.6L6.1.6C5.9.4 5.6.2 5.2.2H2C1.2.2.6.8.6 1.6z" fill="#fff"/><circle cx="2.5" cy="2.3" r=".8" fill="#08a6d6"/></svg>
<div class="abs t" style="left:1080.80px;top:698.44px;font-size:8.7px;line-height:11px;color:#fff;font-weight:400;letter-spacing:0px;-webkit-text-stroke:0.2px #fff;">Orderable</div>
<div class="abs t" style="left:1156.00px;top:679.06px;font-size:9.5px;line-height:12px;color:#25282e;font-weight:400;letter-spacing:-0.1px;">02 Dec 2025</div>
<div class="abs t" style="left:1156.00px;top:694.88px;font-size:8px;line-height:10px;color:#75787e;font-weight:400;letter-spacing:-0.1px;">3:55 PM</div>
<svg class="ico" style="left:1265px;top:686.36px" width="11" height="11" viewBox="0 0 11 11" fill="#555"><path d="M0.8 8.1v2.1h2.1l6.2-6.2-2.1-2.1z"/><path d="M7.8 1l2.2 2.2" stroke="#555" stroke-width=".9"/></svg>
<svg class="ico" style="left:1291.5px;top:686.75px" width="9" height="10" viewBox="0 0 9 10" fill="#dc4a42"><rect x="0.3" y="1" width="8.4" height="1.4"/><rect x="3" y="0" width="3" height="1.2"/><path d="M1 3h7l-.6 6.2c0 .5-.4.8-.9.8H2.5c-.5 0-.9-.3-.9-.8z"/></svg>
<!-- /TABLE -->
<!-- cursor -->
<svg class="ico" style="left:1089px;top:265px" width="22" height="30" viewBox="0 0 22 30"><path d="M2 1.7L2 26 7.8 20.8 11.6 27.4 14.8 25.9 11.9 19.7 19.6 18.2Z" fill="#fff" stroke="#808080" stroke-width="1.4" stroke-linejoin="round"/></svg>
<!-- scrollbar -->
<div class="abs" style="left:1398px;top:43px;width:11px;height:634px;background:#fbfbfb"></div>
<div class="abs" style="left:1401px;top:50px;width:6px;height:397px;border-radius:3px;background:#8b8b8b"></div>
<!-- title -->
<div class="abs t" style="left:338px;top:107.5px;font-size:22px;line-height:26px;color:#1e2433;font-weight:400;letter-spacing:0.15px;-webkit-text-stroke:0.6px #1e2433">Product Database</div>
<div class="abs" style="left:1128px;top:107px;width:101px;height:29px;border-radius:7px;background:#625afc"></div>
<svg class="ico" style="left:1141px;top:116px" width="10" height="10" viewBox="0 0 10 10" stroke="#fff" stroke-width="1.5"><path d="M5 1v8M1 5h8"/></svg>
<div class="abs t" style="left:1158.5px;top:115px;font-size:9.5px;line-height:12px;color:#fff;font-weight:700">Add Product</div>
<div class="abs" style="left:1240px;top:106.5px;width:77px;height:30px;border-radius:8px;border:1px solid #c9c7e6;background:#fff"></div>
<div class="abs t" style="left:1255.5px;top:115px;font-size:9.5px;line-height:12px;color:#5650c4;font-weight:400;letter-spacing:0.25px;-webkit-text-stroke:0.3px #5650c4">Quick Add</div>
<!-- search -->
<div class="abs" style="left:355px;top:165px;width:753px;height:39px;border-radius:5px;border:1px solid #d9dadd;border-top:1.5px solid #d5d6d9;background:#fff"></div>
<svg class="ico" style="left:365px;top:178.5px" width="13" height="13" viewBox="0 0 13 13" fill="none" stroke="#4a4a4a" stroke-width="1.2"><circle cx="5.5" cy="5.5" r="4.3"/><path d="M8.7 8.7L12 12"/></svg>
<div class="abs t" style="left:384px;top:178px;font-size:10.7px;line-height:13px;color:#a4a6aa">Search all columns...</div>
<!-- filters -->
<div class="abs" style="left:1153px;top:170px;width:80px;height:28px;border-radius:9px;border:1px solid #3a3a3a;background:#fff"></div>
<svg class="ico" style="left:1164px;top:180px" width="12" height="9" viewBox="0 0 12 9" stroke="#333" stroke-width="1.1"><path d="M0.5 1h11M2.5 4h7M4.5 7h3"/></svg>
<div class="abs t" style="left:1182px;top:178px;font-size:9.5px;line-height:12px;color:#333;letter-spacing:-0.15px;-webkit-text-stroke:0.25px #333">Filters (0)</div>
<svg class="ico" style="left:1244px;top:179px" width="16" height="12" viewBox="0 0 16 12" fill="#555"><rect x="0.5" y="0.5" width="3.6" height="11" rx="1.5"/><rect x="5.7" y="0.5" width="3.6" height="11" rx="1.5"/><rect x="10.9" y="0.5" width="3.6" height="11" rx="1.5"/></svg>
<svg class="ico" style="left:1279px;top:176px" width="14" height="16" viewBox="0 0 14 16" fill="none" stroke="#b3b3b3" stroke-width="1.2"><path d="M7 11V1.5M4 4.3L7 1.3l3 3M4.5 6.5H1.5v8.5h11V6.5h-3"/></svg>
</div>
</body></html>
